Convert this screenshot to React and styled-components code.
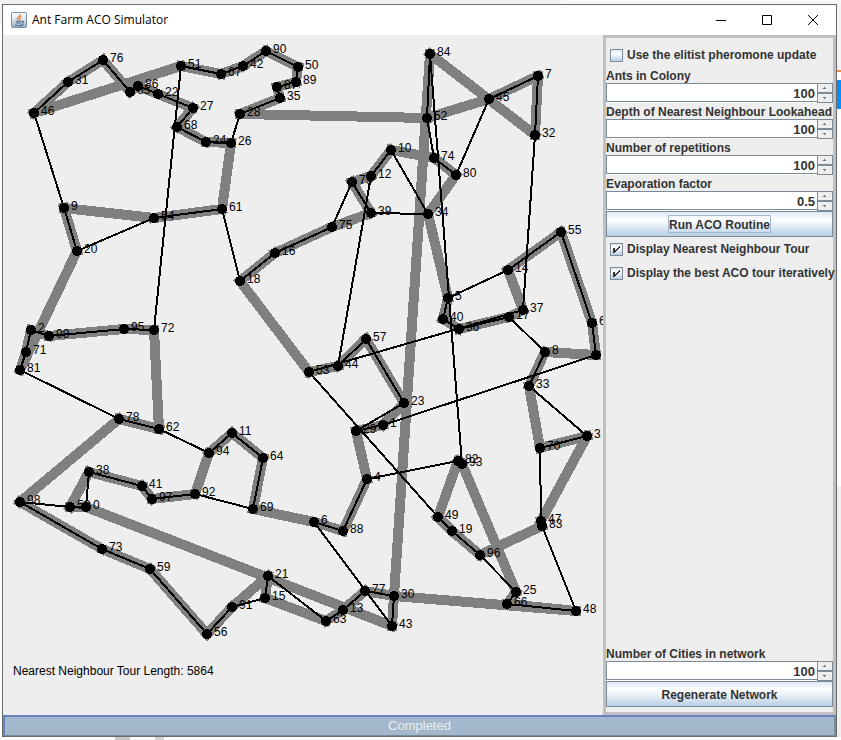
import React, { useId, useState } from "react";
import styled, { createGlobalStyle } from "styled-components";

const Global = createGlobalStyle`
  *, *::before, *::after { box-sizing: border-box; }
  body { margin: 0; background: #f3f3f5; font-family: "Liberation Sans", Arial, sans-serif; }
  button, input { font: inherit; }
`;

const steel = "#7a8a99";
const ink = "#333333";

const Desktop = styled.div`
  display: grid;
  grid-template: 4px minmax(0, 1fr) 3px / 2px minmax(0, 1fr) 4px;
  height: 100vh;
  min-height: 560px;
`;

const Strip = styled.div`
  grid-area: ${(p) => p.$area};
  background: ${(p) => p.$fill};
`;

const Window = styled.main`
  grid-area: 2 / 2;
  display: flex;
  flex-direction: column;
  border: 1px solid #6b6b6b;
  background: #eeeeee;
  overflow: hidden;
`;

const TitleBar = styled.header`
  display: flex;
  align-items: center;
  flex: none;
  height: 30px;
  padding-left: 8px;
  background: #ffffff;
`;

const Title = styled.h1`
  flex: 1;
  margin: 0 0 0 5px;
  font: 400 12px/16px "Open Sans", "Noto Sans", sans-serif;
  color: #000000;
`;

const WindowButton = styled.button`
  display: flex;
  align-items: center;
  justify-content: center;
  width: 46px;
  height: 30px;
  padding: 0;
  border: 0;
  background: transparent;
`;

const Content = styled.div`
  display: flex;
  flex: 1;
  min-height: 0;
`;

const Network = styled.section`
  flex: 1;
  min-width: 0;
  overflow: hidden;
`;

const Plot = styled.svg`
  display: block;
  width: 100%;
  height: 620px;
`;

const NodeLabel = styled.text`
  font-size: 12px;
  fill: #000000;
`;

const TourLength = styled.p`
  margin: 8px 0 0 10px;
  font-size: 12px;
  line-height: 16px;
  color: #000000;
`;

const Panel = styled.form`
  display: flex;
  flex-direction: column;
  flex: none;
  width: 233px;
  padding: 5px 0;
  border: 3px solid #c0c0c0;
  font-weight: 700;
  font-size: 12px;
  color: ${ink};
`;

const Spacer = styled.div`
  flex: 1;
`;

const FieldLabel = styled.label`
  display: block;
  height: 16px;
  line-height: 18px;
  white-space: nowrap;
`;

const SpinnerBox = styled.div`
  display: flex;
  height: 20px;
`;

const SpinnerInput = styled.input`
  flex: 1;
  min-width: 0;
  height: 19px;
  padding: 2px 2px 0 0;
  border: 1px solid ${steel};
  border-right: 0;
  border-radius: 0;
  background: #ffffff;
  box-shadow: 0 1px 0 #ffffff;
  color: ${ink};
  font-size: 13px;
  font-weight: 700;
  line-height: 16px;
  text-align: right;
  outline: none;
`;

const Arrows = styled.div`
  display: flex;
  flex-direction: column;
  width: 16px;
`;

const ArrowButton = styled.button`
  display: flex;
  align-items: center;
  justify-content: center;
  flex: 1;
  padding: 0;
  border: 1px solid ${steel};
  border-radius: 0;
  background: #eeeeee;
`;

const CheckRow = styled.label`
  display: flex;
  align-items: center;
  gap: 4px;
  height: 24px;
  padding-left: 4px;
  white-space: nowrap;
`;

const CheckCell = styled.span`
  display: grid;
  width: 13px;
  height: 13px;

  & > * {
    grid-area: 1 / 1;
  }

  & > svg {
    pointer-events: none;
    visibility: ${(p) => (p.$on ? "visible" : "hidden")};
  }
`;

const CheckInput = styled.input`
  appearance: none;
  width: 13px;
  height: 13px;
  margin: 0;
  border: 1px solid ${steel};
  background: linear-gradient(#dde8f3, #ffffff 35%, #b8cfe5);
`;

const ActionButton = styled.button`
  display: flex;
  align-items: center;
  justify-content: center;
  flex: none;
  height: 26px;
  padding: 0;
  border: 1px solid ${steel};
  border-radius: 0;
  background: linear-gradient(#dde8f3, #ffffff 32%, #b8cfe5);
  color: ${ink};
  font-weight: 700;
  font-size: 12px;
`;

const Caption = styled.span`
  height: 18px;
  line-height: 18px;
  border: 1px solid ${(p) => (p.$focus ? "#a3b8cc" : "transparent")};
`;

const Status = styled.footer`
  flex: none;
  height: 21px;
  border: 2px solid #6382bf;
  border-right-color: #7a8a99;
  border-bottom: 1px solid #7a8a99;
  background: #a3b8cc;
  color: #eeeeee;
  font-size: 13px;
  line-height: 18px;
  text-align: center;
`;

// City number, x, y
const cities = [
  [46, 34, 113], [31, 68, 82], [76, 103, 60], [65, 130, 92], [86, 138, 86],
  [51, 181, 66], [67, 221, 74], [42, 243, 66], [90, 266, 51], [50, 298, 67],
  [89, 296, 82], [87, 277, 87], [35, 280, 98], [28, 240, 114], [22, 158, 94],
  [27, 193, 108], [68, 177, 127], [24, 206, 142], [26, 231, 143], [9, 64, 208],
  [54, 154, 218], [61, 222, 209], [20, 77, 251], [16, 275, 253], [18, 240, 281],
  [2, 31, 330], [99, 49, 336], [95, 124, 329], [72, 154, 330], [71, 26, 352],
  [81, 20, 370], [53, 309, 372], [78, 119, 419], [62, 159, 429], [11, 232, 433],
  [94, 209, 453], [64, 263, 458], [38, 89, 472], [41, 142, 486], [97, 152, 499],
  [92, 195, 494], [69, 253, 509], [98, 20, 502], [58, 70, 507], [0, 86, 507],
  [73, 102, 549], [59, 150, 569], [21, 268, 576], [91, 232, 607], [15, 265, 598],
  [56, 207, 634], [6, 314, 522], [84, 430, 54], [7, 538, 76], [45, 489, 99],
  [52, 427, 118], [32, 535, 135], [10, 391, 150], [74, 434, 158], [12, 371, 176],
  [79, 352, 182], [80, 456, 175], [39, 371, 213], [34, 428, 214], [75, 332, 227],
  [55, 561, 232], [5, 448, 298], [14, 508, 270], [37, 523, 310], [40, 443, 319],
  [36, 459, 329], [17, 509, 317], [57, 366, 339], [44, 338, 366], [8, 545, 352],
  [60, 592, 323], [85, 596, 355], [33, 529, 386], [23, 404, 403], [29, 356, 431],
  [1, 383, 425], [3, 587, 436], [4, 367, 479], [82, 458, 461], [93, 462, 464],
  [70, 540, 448], [47, 541, 521], [83, 542, 526], [49, 438, 517], [19, 452, 531],
  [96, 480, 555], [25, 516, 592], [66, 507, 604], [48, 576, 611], [88, 343, 531],
  [77, 365, 591], [30, 394, 596], [13, 343, 610], [43, 392, 626], [63, 326, 621],
];

const bestTour = [
  46, 31, 76, 65, 86, 22, 27, 68, 24, 26, 61, 54, 9, 20, 81, 71, 2, 99, 95, 72,
  62, 78, 98, 73, 59, 56, 91, 21, 15, 63, 13, 77, 30, 48, 66, 25, 93, 82, 49,
  19, 96, 83, 47, 3, 70, 33, 8, 85, 60, 55, 14, 37, 17, 36, 40, 5, 34, 80, 74,
  10, 12, 79, 39, 75, 16, 18, 53, 44, 57, 23, 1, 29, 4, 88, 6, 69, 64, 11, 94,
  92, 97, 41, 38, 58, 0, 43, 84, 32, 7, 45, 52, 28, 35, 87, 89, 50, 90, 42, 67, 51,
];

const nearestTour = [
  46, 31, 76, 65, 86, 22, 27, 68, 24, 26, 28, 35, 87, 89, 50, 90, 42, 67, 51, 72,
  95, 99, 2, 71, 81, 78, 62, 94, 11, 64, 69, 92, 97, 41, 38, 0, 58, 98, 73, 59,
  56, 91, 15, 21, 63, 13, 77, 30, 43, 6, 88, 4, 82, 93, 84, 52, 74, 80, 45, 7,
  32, 37, 53, 49, 19, 96, 25, 66, 48, 83, 47, 70, 3, 33, 8, 17, 36, 40, 5, 14,
  55, 60, 85, 1, 29, 23, 57, 44, 12, 10, 34, 39, 79, 75, 16, 18, 61, 54, 20, 9,
];

const place = new Map(cities.map(([id, x, y]) => [id, [x, y]]));

function Tour({ order, width, color }) {
  return (
    <g stroke={color} strokeWidth={width} strokeLinecap="square" shapeRendering="crispEdges">
      {order.map((id, i) => {
        const [x1, y1] = place.get(id);
        const [x2, y2] = place.get(order[(i + 1) % order.length]);
        return <line key={id} x1={x1} y1={y1} x2={x2} y2={y2} />;
      })}
    </g>
  );
}

function JavaIcon() {
  return (
    <svg width="16" height="16" viewBox="0 0 16 16" aria-hidden="true">
      <defs>
        <linearGradient id="tile" x1="0" y1="0" x2="0" y2="1">
          <stop offset="0" stopColor="#ffffff" />
          <stop offset="0.5" stopColor="#dfe5ea" />
          <stop offset="1" stopColor="#93a9bb" />
        </linearGradient>
      </defs>
      <rect x="0.5" y="0.5" width="15" height="15" rx="1.5" fill="url(#tile)" stroke="#7891a6" />
      <path d="M9 2c1 2-3 2.600-2.600 4.500.2.800 1 1.200 1.200 2M10.500 4.300C9 5 8 5.700 9 6.700c.4.600.2 1-.4 1.500" fill="none" stroke="#e8762c" strokeWidth="1.200" />
      <path d="M4.500 9.300h6M5 11h5M4 13c2 .8 6 .8 8.500-.4M11 9.200c2-.5 2.200 1.400 0 2" fill="none" stroke="#45708f" strokeWidth="1.100" />
    </svg>
  );
}

function Spinner({ label, initial, step = 1 }) {
  const id = useId();
  const [value, setValue] = useState(initial);
  const bump = (d) => setValue((v) => String(Math.round((Number(v) + d) * 10) / 10));
  return (
    <div>
      <FieldLabel htmlFor={id}>{label}</FieldLabel>
      <SpinnerBox>
        <SpinnerInput id={id} type="text" value={value} onChange={(e) => setValue(e.target.value)} />
        <Arrows>
          <ArrowButton type="button" aria-label={`Increase ${label}`} onClick={() => bump(step)}>
            <svg width="4" height="2" viewBox="0 0 4 2" shapeRendering="crispEdges"><path d="M1 0h1v1h1v1H0V1h1z" fill="#66727e" /></svg>
          </ArrowButton>
          <ArrowButton type="button" aria-label={`Decrease ${label}`} onClick={() => bump(-step)}>
            <svg width="4" height="2" viewBox="0 0 4 2" shapeRendering="crispEdges"><path d="M0 0h3v1H2v1H1V1H0z" fill="#66727e" /></svg>
          </ArrowButton>
        </Arrows>
      </SpinnerBox>
    </div>
  );
}

function Check({ label, checked, onChange }) {
  return (
    <CheckRow>
      <CheckCell $on={checked}>
        <CheckInput type="checkbox" checked={checked} onChange={(e) => onChange(e.target.checked)} />
        <svg width="13" height="13" viewBox="0 0 13 13" aria-hidden="true" shapeRendering="crispEdges">
          <path d="M3 5h2v2h1V6h1V5h1V4h1V3h1v2H9v1H8v1H7v1H6v1H5v1H3z" fill={ink} />
        </svg>
      </CheckCell>
      {label}
    </CheckRow>
  );
}

export default function App() {
  const [elitist, setElitist] = useState(false);
  const [showNearest, setShowNearest] = useState(true);
  const [showBest, setShowBest] = useState(true);

  return (
    <Desktop>
      <Global />
      <Strip $area="1 / 1 / 2 / 4" $fill="linear-gradient(90deg, #f0f0f2 561px, #f8f8fa 561px)" />
      <Strip $area="2 / 1" $fill="linear-gradient(#f3f3f5 20px, #ffffff 20px)" />
      <Strip
        $area="2 / 3"
        $fill="linear-gradient(#f3f3f5 66px, #f28a2e 66px 68px, #ffffff 68px 76px, #0a8cff 76px 105px, #ffffff 105px 482px, #f0f0f0 482px)"
      />
      <Strip $area="3 / 1 / 4 / 4" $fill="linear-gradient(90deg, #ffffff 115px, #c8c8c8 115px 130px, #ffffff 130px 155px, #d4d4d4 155px 164px, #ffffff 164px)" />
      <Window>
        <TitleBar>
          <JavaIcon />
          <Title>Ant Farm ACO Simulator</Title>
          <WindowButton type="button" aria-label="Minimize">
            <svg width="10" height="10" viewBox="0 0 10 10"><path d="M0 5.500h10" stroke="#000" /></svg>
          </WindowButton>
          <WindowButton type="button" aria-label="Maximize">
            <svg width="10" height="10" viewBox="0 0 10 10"><path d="M.5.5h9v9h-9z" fill="none" stroke="#000" /></svg>
          </WindowButton>
          <WindowButton type="button" aria-label="Close">
            <svg width="10" height="10" viewBox="0 0 10 10"><path d="M0 0l10 10M10 0L0 10" stroke="#000" /></svg>
          </WindowButton>
        </TitleBar>
        <Content>
          <Network>
            <Plot viewBox="3 35 600 620" preserveAspectRatio="xMinYMin meet" role="img" aria-label="City network">
              {showBest && <Tour order={bestTour} width={10} color="#808080" />}
              {showNearest && <Tour order={nearestTour} width={2} color="#000000" />}
              {cities.map(([id, x, y]) => (
                <g key={id}>
                  <circle cx={x} cy={y} r="5" shapeRendering="crispEdges" />
                  <NodeLabel x={x + 7} y={y + 2}>{id}</NodeLabel>
                </g>
              ))}
            </Plot>
            <TourLength>Nearest Neighbour Tour Length: 5864</TourLength>
          </Network>
          <Panel onSubmit={(e) => e.preventDefault()}>
            <Check label="Use the elitist pheromone update" checked={elitist} onChange={setElitist} />
            <Spinner label="Ants in Colony" initial="100" />
            <Spinner label="Depth of Nearest Neighbour Lookahead" initial="100" />
            <Spinner label="Number of repetitions" initial="100" />
            <Spinner label="Evaporation factor" initial="0.5" step={0.1} />
            <ActionButton type="button"><Caption $focus>Run ACO Routine</Caption></ActionButton>
            <Check label="Display Nearest Neighbour Tour" checked={showNearest} onChange={setShowNearest} />
            <Check label="Display the best ACO tour iteratively" checked={showBest} onChange={setShowBest} />
            <Spacer />
            <Spinner label="Number of Cities in network" initial="100" />
            <ActionButton type="button"><Caption>Regenerate Network</Caption></ActionButton>
          </Panel>
        </Content>
        <Status role="status">Completed</Status>
      </Window>
    </Desktop>
  );
}
